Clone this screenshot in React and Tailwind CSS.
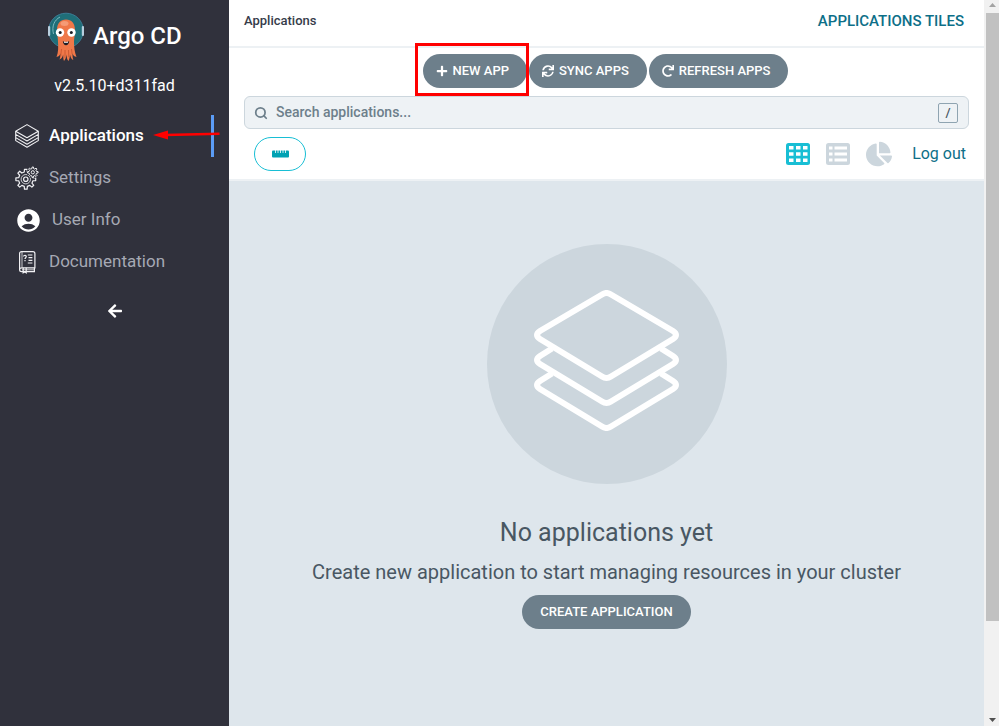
import React from "react";
import { FaPlus, FaSync, FaRedo, FaChartPie, FaArrowLeft } from "react-icons/fa";
import { MdAccountCircle } from "react-icons/md";
import { Search } from "lucide-react";

function ArgoLogo() {
  return (
    <svg width="38" height="50" viewBox="0 0 38 50" aria-hidden="true">
      <circle cx="19" cy="18.500" r="17.300" fill="#1f6e78" stroke="#3b7c95" strokeWidth="1" />
      <path d="M6.500 22C4.500 14 7.500 8 13 5" fill="none" stroke="#7fb9c0" strokeWidth="1" />
      <rect x="1" y="14" width="2.200" height="10" rx="1" fill="#b8cfdf" />
      <rect x="34.800" y="14" width="2.200" height="10" rx="1" fill="#b8cfdf" />
      <path
        d="M10 18c0-6.500 3.500-10.500 9-10.500S28 11.500 28 18c0 4.500-1 8-1 12 0 5 .5 10 2.500 15-2-.3-3.300-1.500-4-3.500 0 2.500.2 4.500.8 6.500-2-.8-2.800-3-3.300-5.500-.2 2.500-.5 4.500-1.500 6.500-1.500-1.500-1.800-4-2-6.500-.3 2.500-.8 4.500-2.500 6.500-.8-2-.8-4.500-.8-6.500-.7 2.500-1.700 4.500-3.700 5 .8-2 1-4 1-6-.7 2-2 3.200-4 3.500C11.500 40 11.300 35 11 30c0-4-1-7.500-1-12z"
        fill="#ef7849"
      />
      <ellipse cx="17.500" cy="11.500" rx="4" ry="2.500" fill="#f59b76" />
      <path d="M14.500 37l-.8 7M18 38v8M21.500 38l.3 7M24.500 37l.6 5" fill="none" stroke="#c4532f" strokeWidth=".8" />
      <circle cx="13" cy="20.500" r="4.200" fill="#fff" />
      <circle cx="24.500" cy="20.500" r="4.200" fill="#fff" />
      <circle cx="13.200" cy="20.500" r="1.500" fill="#1d1d25" />
      <circle cx="24.300" cy="20.500" r="1.500" fill="#1d1d25" />
      <path d="M15.800 29.200c2 .9 4.200.9 6.400 0-.4 2.800-1.600 4-3.200 4s-2.800-1.200-3.200-4z" fill="#1d1d25" />
      <path d="M17 29.600c1.400.5 2.700.5 4 0v1.100h-4z" fill="#fff" />
    </svg>
  );
}

function StackIcon() {
  return (
    <svg width="24" height="24" viewBox="0 0 24 24" fill="none" stroke="#f1f1f4" strokeWidth="1.100" strokeLinejoin="round" aria-hidden="true">
      <path d="M12 .6l11.300 6.600L12 13.800.7 7.200z" />
      <path d="M.7 7.200v3.200L12 17l11.300-6.600V7.200M.7 10.400v3.200L12 20.200l11.300-6.600v-3.200M.7 13.600v3L12 23.300l11.300-6.700v-3" />
    </svg>
  );
}

/* Closed outline of a gear wheel: each tooth is a narrow tip on a wider root. */
function gearPath(cx, cy, root, tip, teeth) {
  const step = (2 * Math.PI) / teeth;
  const points = [];
  for (let i = 0; i < teeth; i += 1) {
    [[-0.27, root], [-0.17, tip], [0.17, tip], [0.27, root]].forEach(([turn, r]) => {
      const a = (i + turn) * step;
      points.push(`${(cx + r * Math.cos(a)).toFixed(2)} ${(cy + r * Math.sin(a)).toFixed(2)}`);
    });
  }
  return `M${points.join("L")}Z`;
}

function GearsIcon() {
  return (
    <svg width="24" height="24" viewBox="0 0 24 24" fill="none" stroke="#f1f1f4" strokeLinejoin="round" aria-hidden="true">
      <path d={gearPath(10.8, 13.200, 7.300, 10, 8)} strokeWidth="1.200" />
      <circle cx="10.800" cy="13.200" r="4.700" strokeWidth=".8" />
      <circle cx="10.800" cy="13.200" r="2.200" strokeWidth="1.200" />
      <circle cx="17.800" cy="6.300" r="6" fill="#30313c" stroke="none" />
      <path d={gearPath(17.800, 6.300, 3.800, 5.300, 8)} strokeWidth="1" />
      <circle cx="17.800" cy="6.300" r="1.600" strokeWidth="1" />
    </svg>
  );
}

function BookIcon() {
  return (
    <svg width="24" height="24" viewBox="0 0 24 24" fill="none" stroke="#f1f1f4" strokeWidth="1.200" aria-hidden="true">
      <path d="M4.600 20V3.600c0-1.300.8-2 2-2h11.300c1.200 0 2 .7 2 2v14.200H6.800c-1.300 0-2.200.7-2.200 1.900s.9 1.900 2.200 1.900h12.600v-3.700" />
      <path d="M7 1.600v16M7 19.800h12" strokeWidth=".8" />
      <path d="M8.200 17.800v5l1.500-1.100 1.500 1.100v-5" />
      <path d="M8.600 6.500c0-1.600 2.700-1.600 2.700.1 0 1.100-1.300 1.100-1.300 2.300M10 10v1.200M12.800 5h4.600M13.500 7.700h3.900M13.500 10.300h3.900M12.800 13h4.600" />
    </svg>
  );
}

function LayersArt() {
  return (
    <svg width="145" height="141" viewBox="0 0 145 141" fill="none" stroke="#fff" strokeWidth="6" aria-hidden="true">
      <path d="M68 4.500Q72.500 1.500 77 4.500L139 41Q145 45 139 49L77 86.500Q72.500 89.500 68 86.500L6 49Q0 45 6 41Z" />
      <path d="M18 58.500L6 66Q0 70 6 74L68 111.500Q72.500 114.500 77 111.500L139 74Q145 70 139 66L127 58.500" />
      <path d="M18 83.500L6 91Q0 95 6 99L68 136.500Q72.500 139.500 77 136.500L139 99Q145 95 139 91L127 83.500" />
    </svg>
  );
}

function RulerIcon() {
  return (
    <svg width="17" height="8" viewBox="0 0 17 8" aria-hidden="true">
      <rect y="0.500" width="17" height="7" rx="1" fill="#00a2b3" />
      <path d="M3.500 0v3M6 0v3M8.500 0v3M11 0v3M13.500 0v3" stroke="#fff" strokeWidth=".8" />
    </svg>
  );
}

function GridIcon() {
  return (
    <svg width="24" height="22" viewBox="0 0 24 22" aria-hidden="true">
      <rect width="24" height="22" rx="2.500" fill="#18bed4" />
      <path d="M3 3h4.500v3.500H3zM10 3h4.500v3.500H10zM17 3h4.500v3.500H17zM3 9.300h4.500v3.500H3zM10 9.300h4.500v3.500H10zM17 9.300h4.500v3.500H17zM3 15.600h4.500V19H3zM10 15.600h4.500V19H10zM17 15.600h4.500V19H17z" fill="#fff" />
    </svg>
  );
}

function ListIcon() {
  return (
    <svg width="24" height="22" viewBox="0 0 24 22" aria-hidden="true">
      <rect width="24" height="22" rx="2.500" fill="#ccd6dd" />
      <path d="M3 3.500h3.500v3H3zM8.500 3.500H21v3H8.500zM3 9.500h3.500v3H3zM8.500 9.500H21v3H8.500zM3 15.500h3.500v3H3zM8.500 15.500H21v3H8.500z" fill="#fff" />
    </svg>
  );
}

function NavItem({ icon, label, active, children }) {
  return (
    <li className="relative">
      <a
        href="#"
        aria-current={active ? "page" : undefined}
        className={
          active
            ? "mr-[15px] flex h-[42px] items-center gap-[10px] border-r-[3px] border-[#5b9cf6] pl-[15px] text-[17px] font-medium text-white"
            : "mr-[15px] flex h-[42px] items-center gap-[10px] pl-[15px] text-[17px] text-[#a6a9b4]"
        }
      >
        {icon}
        {label}
      </a>
      {children}
    </li>
  );
}

const pill =
  "flex h-[34px] items-center gap-[5px] rounded-full bg-[#6d7f8b] text-[13px] font-medium text-white whitespace-nowrap";

export default function App() {
  return (
    <div className="flex h-screen overflow-hidden bg-white font-['Roboto',sans-serif]">
      <aside className="w-[229px] shrink-0 bg-[#30313c]">
        <div className="flex items-center gap-2 pt-3 pl-[47px] text-2xl font-medium text-white">
          <ArgoLogo />
          <span className="pb-0.5">Argo CD</span>
        </div>
        <p className="mt-3 text-center text-base leading-6 text-white">v2.5.10+d311fad</p>
        <nav className="mt-[17px]" aria-label="Main">
          <ul>
            <NavItem icon={<StackIcon />} label="Applications" active>
              <svg className="absolute top-3 left-[153px]" width="68" height="14" viewBox="0 0 68 14" aria-hidden="true">
                <path d="M0 8l15-4.500v9z" fill="#f00" />
                <path d="M12 8l54.500-1.200" stroke="#f00" strokeWidth="2.500" />
              </svg>
            </NavItem>
            <NavItem icon={<GearsIcon />} label="Settings" />
            <NavItem icon={<MdAccountCircle size={27} color="#fff" aria-hidden="true" />} label="User Info" />
            <NavItem icon={<BookIcon />} label="Documentation" />
          </ul>
        </nav>
        <button type="button" aria-label="Collapse sidebar" className="mx-auto mt-5 block text-white">
          <FaArrowLeft size={16} />
        </button>
      </aside>

      <div className="flex min-w-0 flex-1 flex-col">
        <header className="flex h-12 items-center justify-between border-b-2 border-[#edf1f4] pr-5 pb-1 pl-[15px] font-medium">
          <h1 className="text-[13px] text-[#363c4a]">Applications</h1>
          <span className="text-[15px] text-[#0d6f88]">APPLICATIONS TILES</span>
        </header>

        <div className="border-b-2 border-[#edf1f4]">
          <div className="flex justify-center gap-0.5 pt-1.5 pr-0.5">
            <div className="relative">
              <button type="button" className={`${pill} pl-[13px] pr-[18px]`}>
                <FaPlus size={12} aria-hidden="true" />
                NEW APP
              </button>
              <span className="pointer-events-none absolute -top-[11px] -right-0.5 -bottom-2 -left-2 border-3 border-[#f00]" />
            </div>
            <button type="button" className={`${pill} pl-[13px] pr-[18px]`}>
              <FaSync size={12} aria-hidden="true" />
              SYNC APPS
            </button>
            <button type="button" className={`${pill} pl-[13px] pr-[18px]`}>
              <FaRedo size={12} aria-hidden="true" />
              REFRESH APPS
            </button>
          </div>

          <label className="mx-[15px] mt-2 flex h-[33px] items-center gap-2 rounded-md border border-[#ccd6dd] bg-[#eef2f5] pr-[10px] pl-[9px]">
            <Search size={14} strokeWidth={3} color="#6d7f8b" aria-hidden="true" />
            <input
              type="text"
              aria-label="Search applications"
              placeholder="Search applications..."
              className="min-w-0 flex-1 bg-transparent pb-0.5 text-sm font-medium outline-none placeholder:text-[#6d7f8b]"
            />
            <kbd className="flex size-5 items-center justify-center rounded-xs border border-[#8fa4b1] font-['Roboto',sans-serif] text-[13px] font-medium text-[#495763]">/</kbd>
          </label>

          <div className="flex items-center justify-between pt-2 pr-[18px] pb-2 pl-[25px]">
            <button type="button" aria-label="Health status bar" className="flex h-[34px] w-[52px] items-center justify-center rounded-full border border-[#18bed4]">
              <RulerIcon />
            </button>
            <div className="flex items-center gap-4">
              <button type="button" aria-label="Tiles view"><GridIcon /></button>
              <button type="button" aria-label="List view"><ListIcon /></button>
              <button type="button" aria-label="Summary view"><FaChartPie size={26} color="#ccd6dd" /></button>
              <a href="#" className="pl-1 text-base text-[#0d6f88]">Log out</a>
            </div>
          </div>
        </div>

        <main className="flex flex-1 flex-col items-center bg-[#dee6ec] pt-[63px] text-[#495763]">
          <div className="flex size-60 items-center justify-center rounded-full bg-[#ccd6dd] pb-2">
            <LayersArt />
          </div>
          <h2 className="mt-[33px] text-[25px] leading-8">No applications yet</h2>
          <p className="mt-[11px] text-xl leading-6">Create new application to start managing resources in your cluster</p>
          <button type="button" className={`${pill} mt-[11px] px-[18px]`}>CREATE APPLICATION</button>
        </main>
      </div>

      <div className="flex w-[15px] shrink-0 flex-col bg-[#f1f1f1] pl-0.5" aria-hidden="true">
        <svg width="13" height="13" viewBox="0 0 13 13">
          <path d="M3 7h7L6.500 3z" fill="#a3a3a3" />
        </svg>
        <div className="flex-1">
          <div className="h-[87%] bg-[#c1c1c1]" />
        </div>
        <svg width="13" height="14" viewBox="0 0 13 14">
          <path d="M3 6h7L6.500 10z" fill="#505050" />
        </svg>
      </div>
    </div>
  );
}
